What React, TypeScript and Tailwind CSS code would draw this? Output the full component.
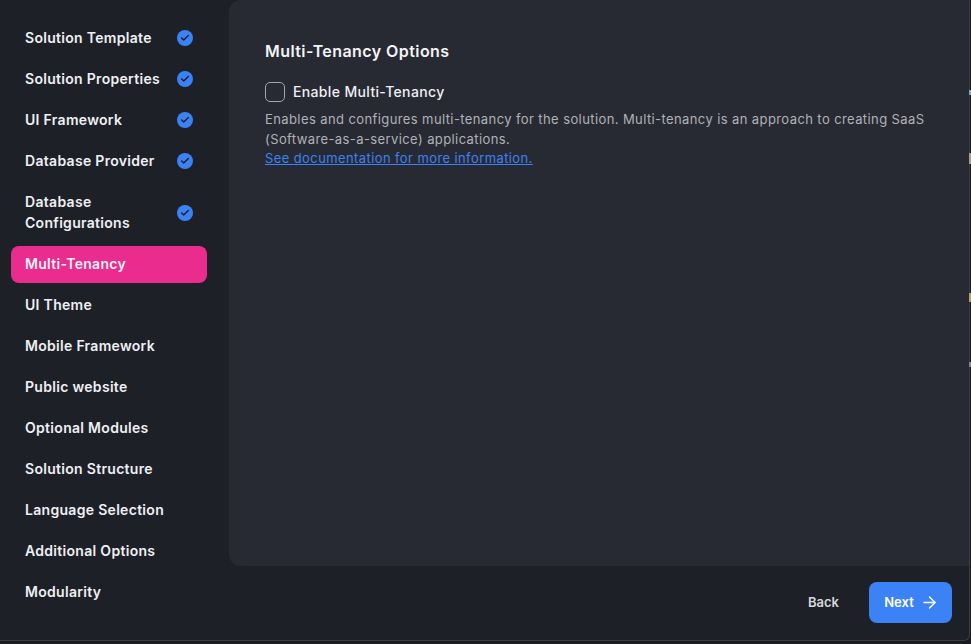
import { ArrowRight, Check } from "lucide-react";

const steps = [
  { name: "Solution Template", done: true },
  { name: "Solution Properties", done: true },
  { name: "UI Framework", done: true },
  { name: "Database Provider", done: true },
  { name: "Database Configurations", done: true },
  { name: "Multi-Tenancy", active: true },
  { name: "UI Theme" },
  { name: "Mobile Framework" },
  { name: "Public website" },
  { name: "Optional Modules" },
  { name: "Solution Structure" },
  { name: "Language Selection" },
  { name: "Additional Options" },
  { name: "Modularity" },
];

const App = () => {
  return (
    <div className="relative w-[971px] h-[644px] overflow-hidden bg-[#1a1b20] font-['Inter',sans-serif] text-white">
      <div className="w-[970px] h-[641px] flex bg-[#1e2027] border-b border-r border-[#3a3c42] rounded-br-[6px] overflow-hidden">
        <div className="w-[229px] shrink-0 pt-5 pl-[11px] pr-[22px] flex flex-col gap-1">
          {steps.map((step) => (
            <div
              key={step.name}
              className={`flex items-center justify-between px-[14px] rounded-lg text-[14px] leading-[21px] font-semibold tracking-[0.3px] ${
                step.active ? "bg-[#e92c8d]" : ""
              }`}
            >
              <span
                className={
                  step.name === "Database Configurations"
                    ? "w-[120px] pt-[7px] pb-[9px] text-[#eef0f3]"
                    : "pt-[7px] pb-[9px] text-[#eef0f3]"
                }
              >
                {step.name}
              </span>
              {step.done && (
                <span className="w-4 h-4 mb-px rounded-full bg-[#3b82f6] flex items-center justify-center">
                  <Check size={10} strokeWidth={3.5} className="text-[#1e2027]" />
                </span>
              )}
            </div>
          ))}
        </div>
        <div className="flex-1 flex flex-col">
          <div className="h-[566px] bg-[#282a33] rounded-l-xl pl-9 pt-[39px] pr-6">
            <h2 className="text-[16px] leading-6 font-semibold tracking-[0.43px] text-[#f3f4f6]">
              Multi-Tenancy Options
            </h2>
            <label className="mt-[19px] flex items-center gap-2">
              <span className="w-5 h-5 rounded-[5px] border border-[#a3a5ab]" />
              <span className="text-[14px] leading-5 font-medium tracking-[0.35px] text-[#eef0f3]">
                Enable Multi-Tenancy
              </span>
            </label>
            <p className="mt-[8px] text-[13px] leading-[19.5px] tracking-[0.4px] text-[#b0b2b8]">
              Enables and configures multi-tenancy for the solution. Multi-tenancy is an approach to creating SaaS
              <br />
              (Software-as-a-service) applications.
              <br />
              <a href="#" className="text-[#3b82f6] underline">
                See documentation for more information.
              </a>
            </p>
          </div>
          <div className="flex-1 flex items-center justify-end gap-[14px] pr-[17px] pb-px">
            <button className="px-4 h-10 text-[13px] font-semibold text-[#d6d8dc]">Back</button>
            <button className="w-[83px] h-[41px] rounded-lg bg-[#3b82f6] flex items-center justify-center gap-[6px] pl-[2px] text-[13px] font-semibold">
              Next
              <ArrowRight size={19} strokeWidth={1.8} />
            </button>
          </div>
        </div>
      </div>
      {/* bits of the window behind, peeking out at the right edge */}
      <span className="absolute left-[969px] top-[90px] w-[2px] h-[5px] bg-[#8fa6bd]" />
      <span className="absolute left-[969px] top-[153px] w-[2px] h-[11px] bg-[#ab9f8f]" />
      <span className="absolute left-[969px] top-[293px] w-[2px] h-[9px] bg-[#b5a06a]" />
      <span className="absolute left-[969px] top-[362px] w-[2px] h-[5px] bg-[#7f8596]" />
    </div>
  );
};

export default App;
